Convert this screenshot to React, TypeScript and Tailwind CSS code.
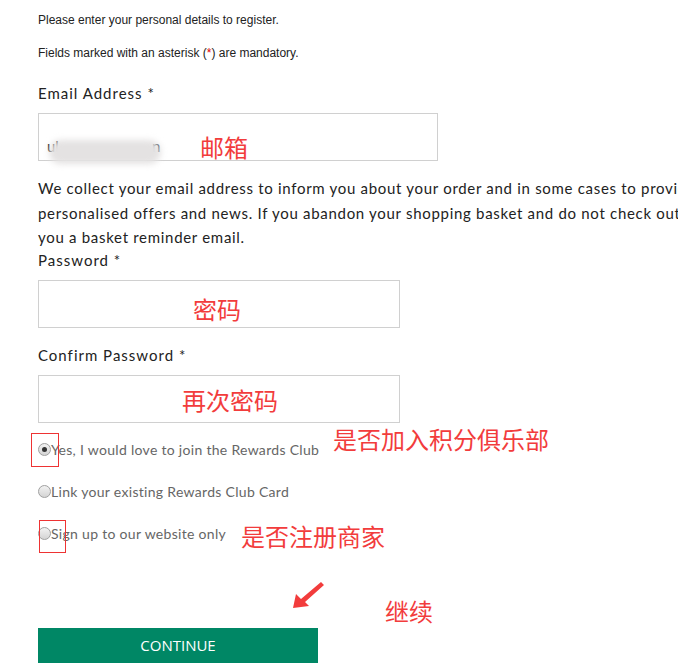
import { ReactNode } from "react";

const NOTE = "absolute text-[24px] leading-[24px] text-[#f23c3c] whitespace-nowrap [font-family:'Noto_Sans_CJK_SC',sans-serif]";

function Note({ children, className }: { children: ReactNode; className: string }) {
  return <div className={`${NOTE} ${className}`}>{children}</div>;
}

function Radio({ checked = false, children }: { checked?: boolean; children: ReactNode }) {
  return (
    <label className="flex items-center h-5 text-[14px] tracking-[0.3px] text-[#666] whitespace-nowrap">
      <span className="w-[13px] h-[13px] rounded-full border border-[#a0a0a0] bg-gradient-to-b from-[#f2f2f2] to-[#d4d4d4] flex items-center justify-center shrink-0">
        {checked && <span className="w-[5px] h-[5px] rounded-full bg-[#333]" />}
      </span>
      {children}
    </label>
  );
}

function Field({ label, width, children }: { label: string; width: string; children?: ReactNode }) {
  return (
    <div className={`flex flex-col gap-[10px] ${width}`}>
      <div className="text-[15px] leading-5 tracking-[1px] text-[#222]">{label}</div>
      <div className="relative h-[48px] border border-[#d0d0d0] bg-white">{children}</div>
    </div>
  );
}

export default function App() {
  return (
    <div className="relative w-[678px] h-[667px] overflow-hidden bg-white [font-family:Lato,'Liberation_Sans',sans-serif]">
      <div className="pl-[38px] pt-[12px] flex flex-col items-start">
        <div className="flex flex-col gap-[17px] text-[12px] leading-4 text-[#222] [font-family:'Liberation_Sans',Arial,sans-serif]">
          <p>Please enter your personal details to register.</p>
          <p>
            Fields marked with an asterisk (<span className="text-[#d00]">*</span>) are mandatory.
          </p>
        </div>

        <div className="mt-[22px]">
          <Field label="Email Address *" width="w-[400px]">
            <span className="absolute left-[8px] top-[22px] text-[15px] leading-5 text-[#222]">ul</span>
            <span className="absolute left-[113px] top-[22px] text-[15px] leading-5 text-[#222]">n</span>
            <div className="absolute left-[10px] top-[26px] w-[112px] h-[24px] rounded-full bg-[#e4e2e2] blur-[3px]" />
          </Field>
        </div>

        <div className="mt-[15px] text-[15px] leading-[24.5px] tracking-[0.7px] text-[#222] whitespace-nowrap">
          <div>We collect your email address to inform you about your order and in some cases to provide you with</div>
          <div>personalised offers and news. If you abandon your shopping basket and do not check out, we may send</div>
          <div>you a basket reminder email.</div>
        </div>

        <div className="flex flex-col gap-[17px]">
          <Field label="Password *" width="w-[362px]" />
          <Field label="Confirm Password *" width="w-[362px]" />
        </div>

        <div className="mt-[17px] flex flex-col gap-[22px]">
          <Radio checked>Yes, I would love to join the Rewards Club</Radio>
          <Radio>Link your existing Rewards Club Card</Radio>
          <Radio>Sign up to our website only</Radio>
        </div>

        <button className="mt-[84px] w-[280px] h-[35px] bg-[#008765] text-white text-[15px] [font-family:'Open_Sans',sans-serif]">
          CONTINUE
        </button>
      </div>

      <Note className="left-[200px] top-[135px]">邮箱</Note>
      <Note className="left-[193px] top-[297px]">密码</Note>
      <Note className="left-[182px] top-[388px]">再次密码</Note>
      <Note className="left-[333px] top-[427px]">是否加入积分俱乐部</Note>
      <Note className="left-[241px] top-[524px]">是否注册商家</Note>
      <Note className="left-[385px] top-[599px]">继续</Note>

      <div className="absolute left-[31px] top-[433px] w-[28px] h-[34px] border border-[#e33]" />
      <div className="absolute left-[39px] top-[520px] w-[27px] h-[33px] border border-[#e33]" />

      <svg className="absolute left-[290px] top-[580px]" width="40" height="32" viewBox="0 0 40 32">
        <polygon points="3,28 6,14 11,19 31,2 34,5 15,22 19,26" fill="#f23c3c" />
      </svg>
    </div>
  );
}
